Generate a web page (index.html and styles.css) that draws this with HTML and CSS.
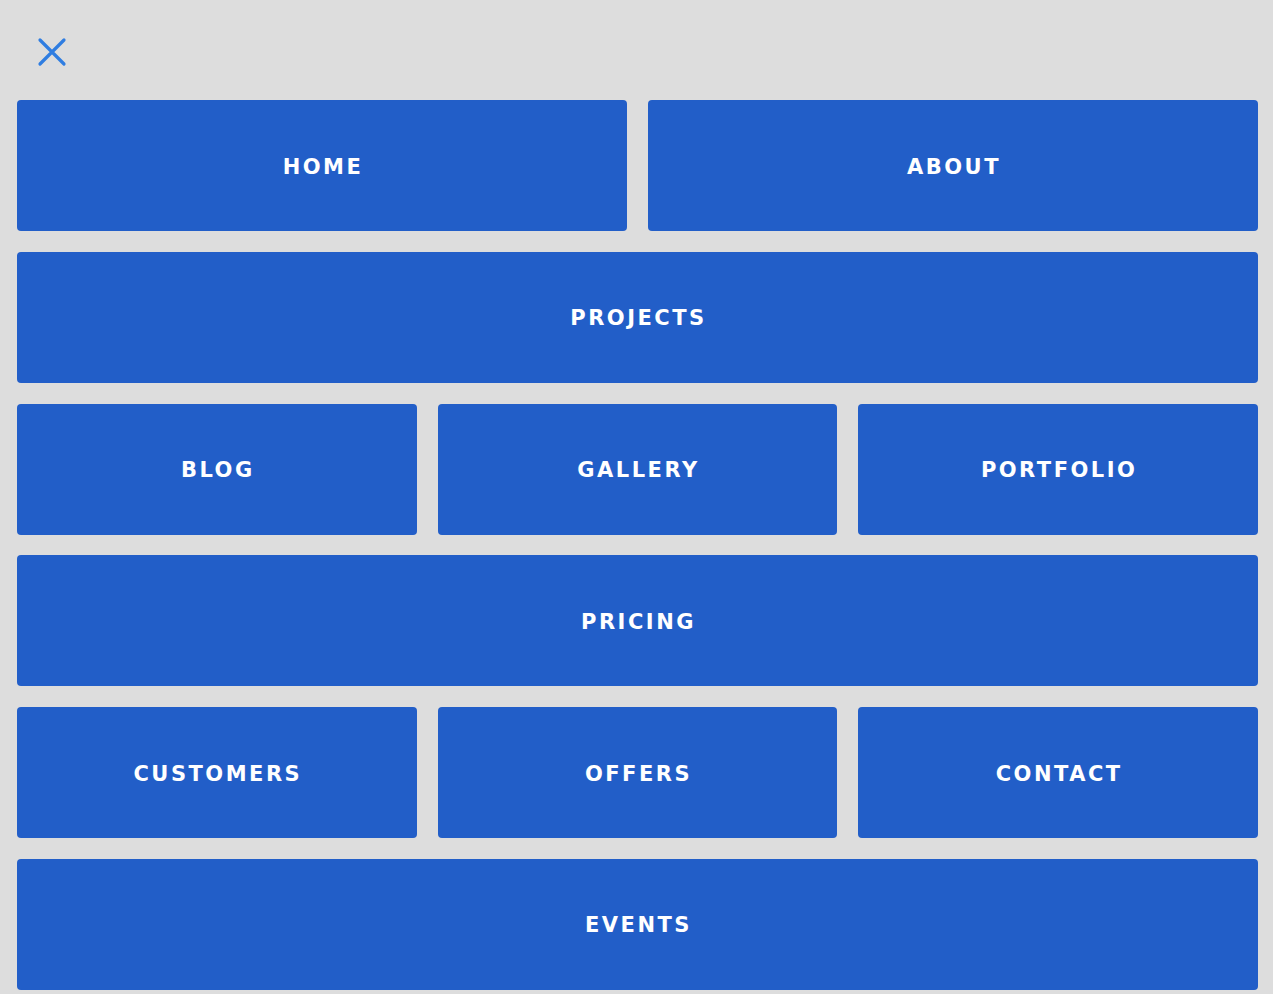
FILE: index.html
```html
<!DOCTYPE html>
<html lang="en">
<head>
<meta charset="utf-8">
<title>Menu</title>
<link rel="stylesheet" href="styles.css">
</head>
<body>
<div class="menu">
  <div class="top">
    <button class="close" aria-label="Close">
      <svg width="30" height="30" viewBox="0 0 30 30"><path d="M3 3 L27 27 M27 3 L3 27" stroke="#2f7de1" stroke-width="3.2" stroke-linecap="round" fill="none"/></svg>
    </button>
  </div>
  <nav class="grid">
    <a class="tile half">HOME</a>
    <a class="tile half">ABOUT</a>
    <a class="tile full">PROJECTS</a>
    <a class="tile third">BLOG</a>
    <a class="tile third">GALLERY</a>
    <a class="tile third">PORTFOLIO</a>
    <a class="tile full">PRICING</a>
    <a class="tile third">CUSTOMERS</a>
    <a class="tile third">OFFERS</a>
    <a class="tile third">CONTACT</a>
    <a class="tile full">EVENTS</a>
  </nav>
</div>
</body>
</html>
```
FILE: styles.css
```css
html, body {
  margin: 0;
  padding: 0;
  background: #dddddd;
  height: 100%;
  overflow: hidden;
}
.menu {
  padding: 0 15px 0 17px;
}
.top {
  height: 100px;
  display: flex;
  align-items: flex-start;
}
.close {
  margin: 37px 0 0 20px;
  padding: 0;
  width: 30px;
  height: 30px;
  border: 0;
  background: transparent;
  display: flex;
}
.grid {
  display: grid;
  grid-template-columns: repeat(6, 1fr);
  grid-auto-rows: 131px;
  column-gap: 21px;
  row-gap: 20.8px;
}
.tile {
  background: #225ec8;
  border-radius: 4px;
  color: #ffffff;
  display: flex;
  align-items: center;
  justify-content: center;
  font-family: "DejaVu Sans", sans-serif;
  font-weight: bold;
  font-size: 21px;
  letter-spacing: 2.5px;
  padding: 2px 0 0 2px;
}
.half { grid-column: span 3; }
.third { grid-column: span 2; }
.full { grid-column: span 6; }
```
